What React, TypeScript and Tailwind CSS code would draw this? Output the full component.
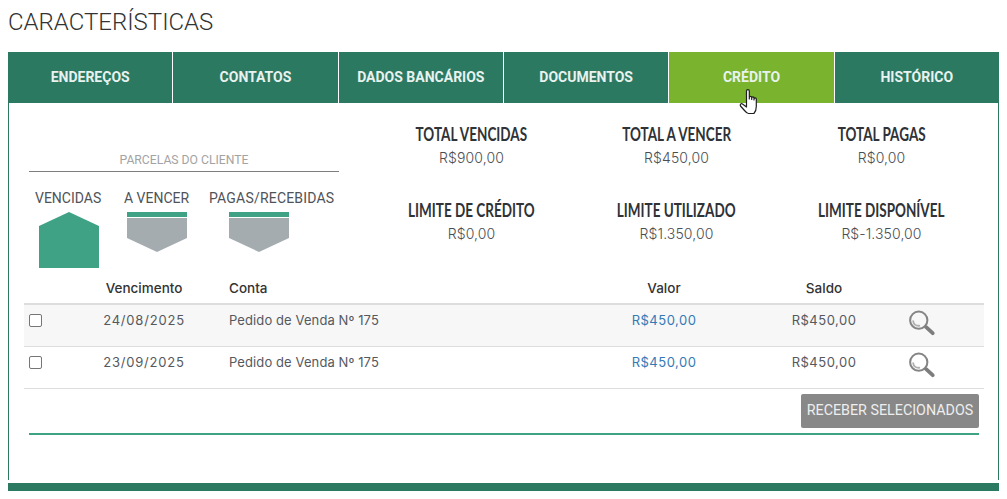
const tabs = ["ENDEREÇOS", "CONTATOS", "DADOS BANCÁRIOS", "DOCUMENTOS", "CRÉDITO", "HISTÓRICO"];

const stats = [
  { label: "TOTAL VENCIDAS", value: "R$900,00" },
  { label: "TOTAL A VENCER", value: "R$450,00" },
  { label: "TOTAL PAGAS", value: "R$0,00" },
  { label: "LIMITE DE CRÉDITO", value: "R$0,00" },
  { label: "LIMITE UTILIZADO", value: "R$1.350,00" },
  { label: "LIMITE DISPONÍVEL", value: "R$-1.350,00" },
];

const rows = [
  { date: "24/08/2025", conta: "Pedido de Venda Nº 175", valor: "R$450,00", saldo: "R$450,00" },
  { date: "23/09/2025", conta: "Pedido de Venda Nº 175", valor: "R$450,00", saldo: "R$450,00" },
];

function HandCursor() {
  return (
    <svg className="absolute left-[739px] top-[88px]" width="24" height="27" viewBox="0 0 24 27">
      <path
        d="M7.500 3c0-1.800 2.800-1.800 2.800 0V11V9.500c0-1.500 2.400-1.500 2.400 0v2V10c0-1.400 2.300-1.400 2.300 0v2V11c0-1.400 2.300-1.400 2.300 0V18.500c0 3-1.400 6-2.400 7H9.500C8 25.500 6.800 24 5.500 22.500L1.500 18C.6 16.500 2 15 3.500 16L7.500 19Z"
        fill="#fff"
        stroke="#1f1f1f"
        strokeWidth="1.200"
        strokeLinejoin="round"
      />
    </svg>
  );
}

function SearchIcon() {
  return (
    <svg width="26" height="26" viewBox="0 0 28 28" fill="none">
      <circle cx="10.500" cy="11" r="9.300" stroke="#858585" strokeWidth="2.200" />
      <path d="M4.500 12c.5 3 3 5.200 6.500 5" stroke="#b0b0b0" strokeWidth="2" strokeLinecap="round" />
      <path d="M18.500 18.500l7 6.500" stroke="#7d7d7d" strokeWidth="4" strokeLinecap="round" />
    </svg>
  );
}

function Legend() {
  return (
    <div className="flex flex-col">
      <div className="flex h-[21px] items-center justify-center text-[12.200px] text-[#a3a3a3] font-['Roboto',sans-serif]">
        PARCELAS DO CLIENTE
      </div>
      <div className="h-px bg-[#7f7f7f]" />
      <div className="flex pl-[6px] pt-[17px] font-['Roboto',sans-serif] text-[14px] leading-[18px] text-[#4f5358]">
        <div className="flex w-[67px] flex-col">
          <div>VENCIDAS</div>
          <svg className="ml-[4px] mt-[5px]" width="60" height="56" viewBox="0 0 60 56">
            <path d="M30 0L60 14V56H0V14Z" fill="#40a285" />
          </svg>
        </div>
        <div className="ml-[22px] flex w-[67px] flex-col">
          <div className="whitespace-nowrap">A VENCER</div>
          <div className="ml-[3px] mt-[5px] h-[5px] w-[60px] bg-[#40a285]" />
          <svg className="ml-[3px] mt-px" width="60" height="34" viewBox="0 0 60 34">
            <path d="M0 0H60V20L30 34L0 20Z" fill="#a5acb0" />
          </svg>
        </div>
        <div className="ml-[18px] flex w-[126px] flex-col">
          <div className="whitespace-nowrap tracking-[0.2px]">PAGAS/RECEBIDAS</div>
          <div className="ml-[20px] mt-[5px] h-[5px] w-[60px] bg-[#40a285]" />
          <svg className="ml-[20px] mt-px" width="60" height="34" viewBox="0 0 60 34">
            <path d="M0 0H60V20L30 34L0 20Z" fill="#a5acb0" />
          </svg>
        </div>
      </div>
    </div>
  );
}

export default function App() {
  return (
    <div className="relative h-[499px] w-[1007px] overflow-hidden bg-white px-2 font-['Inter',sans-serif]">
      <h1 className="flex h-[52px] items-center pb-[8px] font-['Roboto',sans-serif] text-[24px] font-light text-[#333]">
        CARACTERÍSTICAS
      </h1>

      {/* Tabs */}
      <div className="flex h-[51px] w-[991px]">
        {tabs.map((tab, i) => (
          <div
            key={tab}
            className={
              "flex flex-1 items-center justify-center border-white font-['Roboto',sans-serif] text-[14px] font-bold text-[#e8f2ee] " +
              (i === 4 ? "bg-[#7ab32e] " : "bg-[#2c7962] ") +
              (i < 5 ? "border-r" : "")
            }
          >
            {tab}
          </div>
        ))}
      </div>

      {/* Panel */}
      <div className="h-[377px] w-[991px] border-x border-[#2c7962] pt-[8px]">
        <div className="flex items-start pl-5">
          <div className="mt-[39px] w-[310px]">
            <Legend />
          </div>
          <div className="ml-[30px] grid w-[615px] grid-cols-3 gap-y-[30px] pt-[11px]">
            {stats.map((s) => (
              <div key={s.label} className="flex flex-col items-center">
                <div className="h-[24px] origin-center scale-x-[0.75] whitespace-nowrap font-['Lato',sans-serif] text-[18px] leading-[24px] font-bold text-[#2f3237]">
                  {s.label}
                </div>
                <div className="mt-[2px] text-[14px] leading-[20px] font-light tracking-[0.1px] text-[#4a4e52]">{s.value}</div>
              </div>
            ))}
          </div>
        </div>

        <div className="ml-[15px] mt-[3px] w-[960px]">
          <table className="w-full table-fixed border-collapse text-[13px] text-[#55595e]">
            <colgroup>
              <col className="w-[40px]" />
              <col className="w-[160px]" />
              <col className="w-[360px]" />
              <col className="w-[160px]" />
              <col className="w-[160px]" />
              <col className="w-[80px]" />
            </colgroup>
            <thead>
              <tr className="h-[33px] border-b-2 border-[#dddddd] text-[13.500px] text-[#333]">
                <th />
                <th className="pt-[2px] text-center font-medium">Vencimento</th>
                <th className="pl-[5px] pt-[2px] text-left font-medium">Conta</th>
                <th className="pt-[2px] text-center font-medium">Valor</th>
                <th className="pt-[2px] text-center font-medium">Saldo</th>
                <th />
              </tr>
            </thead>
            <tbody>
              {rows.map((r, i) => (
                <tr key={r.date} className={"h-[42px] border-b border-[#dddddd] align-top " + (i === 0 ? "bg-[#f7f7f7]" : "")}>
                  <td className="pl-[5px] pt-[9px]">
                    <div className="h-[13px] w-[13px] rounded-[2px] border border-[#767676] bg-white" />
                  </td>
                  <td className="pt-[6px] text-center tracking-[0.8px]">{r.date}</td>
                  <td className="pl-[5px] pt-[6px] tracking-[0.1px]">{r.conta}</td>
                  <td className="pt-[6px] text-center tracking-[0.5px] text-[#337ab7]">{r.valor}</td>
                  <td className="pt-[6px] text-center tracking-[0.5px]">{r.saldo}</td>
                  <td className="pl-[5px] pt-[5px]">
                    <SearchIcon />
                  </td>
                </tr>
              ))}
            </tbody>
          </table>
          <div className="flex justify-end pr-[5px] pt-[5px]">
            <button
              type="button"
              className="h-[34px] w-[178px] rounded-[2px] bg-[#888888] pt-px font-['Roboto',sans-serif] text-[14.300px] whitespace-nowrap text-[#eeeeee]"
            >
              RECEBER SELECIONADOS
            </button>
          </div>
          <div className="ml-[5px] mr-[5px] mt-[5px] h-[2px] bg-[#40a285]" />
        </div>
      </div>

      <div className="mt-[3px] h-[8px] w-[991px] bg-[#2c7962]" />
      <HandCursor />
    </div>
  );
}
